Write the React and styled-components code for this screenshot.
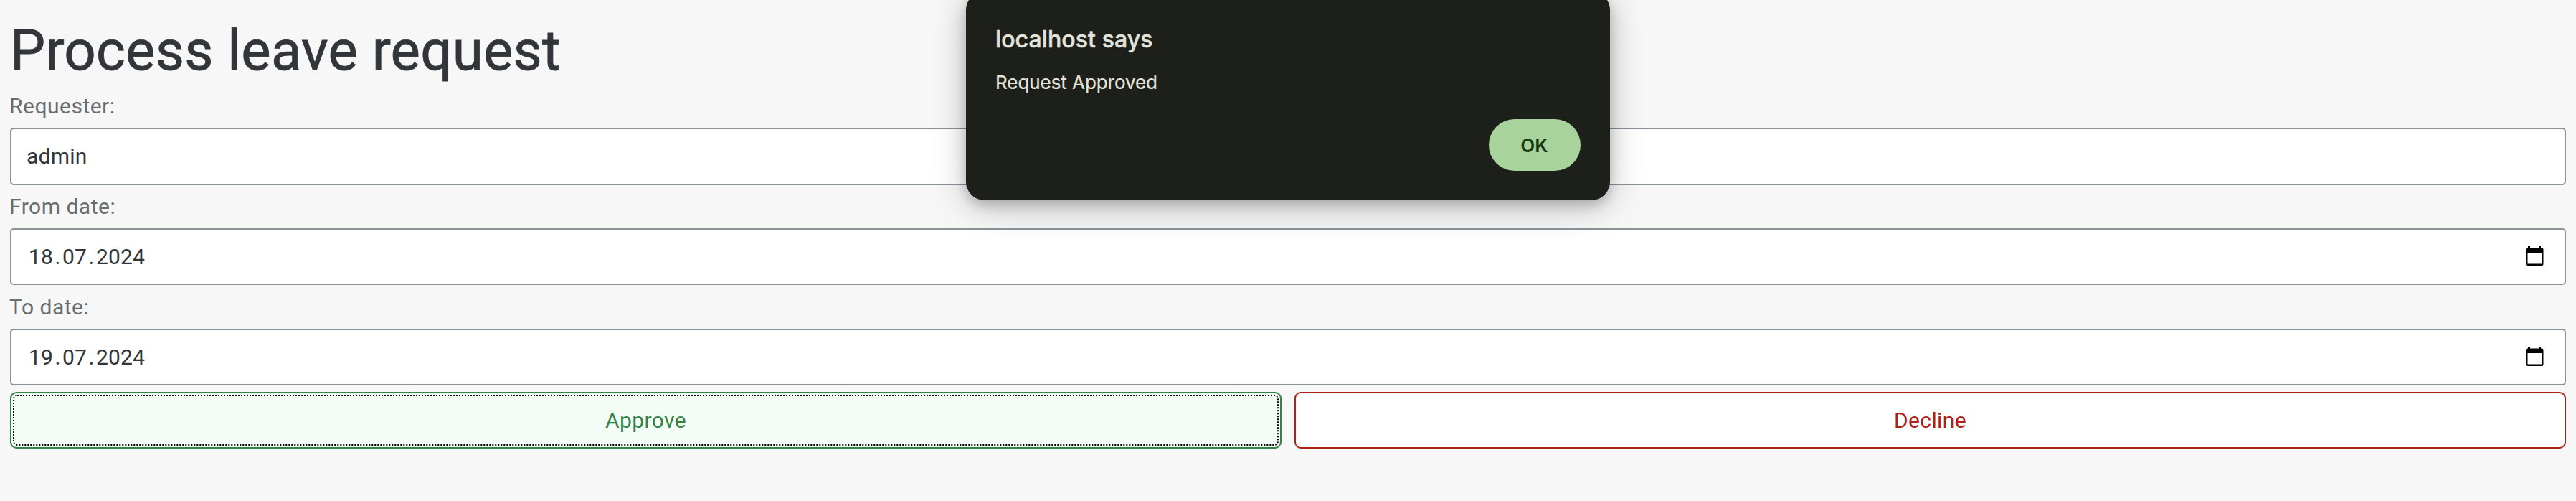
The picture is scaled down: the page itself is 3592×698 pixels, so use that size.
import React from "react";
import styled, { createGlobalStyle } from "styled-components";

const GlobalStyle = createGlobalStyle`
  * { box-sizing: border-box; }
  html, body { margin: 0; background: #f7f7f7; }
  body {
    height: 698px;
    overflow: hidden;
    font-family: Roboto, "Noto Sans", sans-serif;
    font-size: 30px;
    color: #32363a;
  }
`;

const Page = styled.main`
  display: flex;
  flex-direction: column;
  height: 698px;
  padding: 20px 14px 0;
  background: #f7f7f7;
`;

const Title = styled.h1`
  margin: 0;
  height: 108px;
  line-height: 102px;
  font-size: 78px;
  font-weight: 400;
  letter-spacing: 0.22px;
  -webkit-text-stroke: 0.8px currentColor;
  white-space: nowrap;
`;

const Field = styled.div`
  display: flex;
  flex-direction: column;
  height: 140px;
`;

const Label = styled.label`
  height: 50px;
  line-height: 40px;
  color: #6a6d70;
  letter-spacing: 0.5px;
  text-indent: -1px;
`;

const Control = styled.div`
  display: flex;
  align-items: center;
  justify-content: space-between;
  height: ${(p) => p.$height || 79}px;
  padding: 0 27px 0 22px;
  border: 2px solid #89919a;
  border-radius: 5px;
  background: #fff;
  line-height: 34px;
`;

const TextValue = styled.span`
  margin-left: -1px;
  letter-spacing: 0.2px;
`;

const DateText = styled.span`
  display: flex;
  padding-left: 2px;
  letter-spacing: 0.15px;
`;

const Dot = styled.span`
  width: 13px;
  text-align: center;
`;

const Actions = styled.div`
  display: grid;
  grid-template-columns: 1fr 1fr;
  column-gap: 18px;
  margin-top: -2px;
`;

const Action = styled.button`
  display: flex;
  height: 79px;
  padding: 2px;
  border: 2px solid ${(p) => p.$color};
  border-radius: 9px;
  background: ${(p) => (p.$focused ? "#f3fdf6" : "#fff")};
  color: ${(p) => p.$color};
  font: inherit;
  letter-spacing: 0.4px;
`;

const FocusRing = styled.span`
  flex: 1;
  display: flex;
  align-items: center;
  justify-content: center;
  align-self: stretch;
  border: 2px dotted ${(p) => (p.$visible ? "#000" : "transparent")};
  border-radius: 6px;
`;

const Dialog = styled.section`
  position: absolute;
  top: -12px;
  left: 1347px;
  width: 898px;
  height: 291px;
  padding: 44px 41px 41px 41px;
  display: flex;
  flex-direction: column;
  border-radius: 26px;
  background: #1d1f1a;
  color: #e2e4dc;
  font-family: Inter, sans-serif;
  box-shadow: 0 6px 16px rgba(0, 0, 0, 0.18), 0 8px 48px rgba(0, 0, 0, 0.26);
`;

const DialogTitle = styled.h2`
  margin: 0;
  height: 62px;
  line-height: 46px;
  font-size: 32px;
  font-weight: 500;
  letter-spacing: 0.1px;
  -webkit-text-stroke: 0.5px currentColor;
`;

const Message = styled.p`
  margin: 0;
  line-height: 41px;
  font-size: 26px;
  letter-spacing: -0.06px;
  -webkit-text-stroke: 0.2px currentColor;
`;

const OkButton = styled.button`
  align-self: flex-end;
  margin-top: auto;
  width: 128px;
  height: 72px;
  padding: 0 1px 0 0;
  border: 0;
  border-radius: 36px;
  background: #a8d39c;
  color: #163b12;
  font: 600 26px Inter, sans-serif;
`;

const Calendar = styled.svg`
  display: block;
  width: 29px;
  height: 28px;
  margin-bottom: 1px;
`;

const CalendarIcon = () => (
  <Calendar viewBox="0 0 29 28" aria-hidden="true">
    <path
      fillRule="evenodd"
      d="M5 0h3v2.5h12V0h3v2.5h1.500a2 2 0 0 1 2 2V25a2 2 0 0 1-2 2H4a2 2 0 0 1-2-2V4.500a2 2 0 0 1 2-2h1zM4.500 9v15.500H24V9z"
    />
  </Calendar>
);

const DateField = ({ label, value }) => (
  <Field>
    <Label>{label}</Label>
    <Control>
      <DateText>
        {value.split(/(\.)/).map((part, i) =>
          part === "." ? <Dot key={i}>.</Dot> : <span key={i}>{part}</span>
        )}
      </DateText>
      <CalendarIcon />
    </Control>
  </Field>
);

export default function App() {
  return (
    <>
      <GlobalStyle />
      <Page>
        <Title>Process leave request</Title>
        <Field>
          <Label>Requester:</Label>
          <Control $height={80}>
            <TextValue>admin</TextValue>
          </Control>
        </Field>
        <DateField label="From date:" value="18.07.2024" />
        <DateField label="To date:" value="19.07.2024" />
        <Actions>
          <Action $color="#348345" $focused>
            <FocusRing $visible>Approve</FocusRing>
          </Action>
          <Action $color="#b02015">
            <FocusRing>Decline</FocusRing>
          </Action>
        </Actions>
      </Page>
      <Dialog role="dialog">
        <DialogTitle>localhost says</DialogTitle>
        <Message>Request Approved</Message>
        <OkButton>OK</OkButton>
      </Dialog>
    </>
  );
}
